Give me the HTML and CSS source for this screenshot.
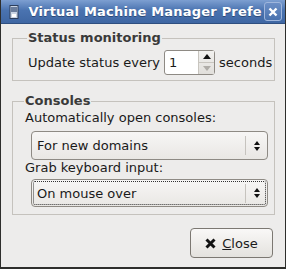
FILE: index.html
```html
<!DOCTYPE html>
<html lang="en">
<head>
    <meta charset="UTF-8">
    <title>Virtual Machine Manager Preferences</title>
    <link rel="stylesheet" href="styles.css">
</head>
<body>
    <div class="window">
        <div class="titlebar">
            <span class="app-icon">
                <svg width="10" height="14" viewBox="0 0 10 14">
                    <rect x="1" y="0.5" width="8" height="13" fill="#c9d4e4" stroke="#2c3e5c"/>
                    <rect x="2" y="2" width="6" height="5" fill="#6a7d9c"/>
                    <rect x="3" y="9" width="4" height="3" fill="#fff"/>
                </svg>
            </span>
            <span class="title">Virtual Machine Manager Prefe</span>
            <span class="close-x">
                <svg width="10" height="10" viewBox="0 0 10 10">
                    <path d="M1.5 1.5 L8.5 8.5 M8.5 1.5 L1.5 8.5" stroke="#fff" stroke-width="2.4"/>
                </svg>
            </span>
        </div>
        <div class="content">
            <fieldset class="frame">
                <legend>Status monitoring</legend>
                <div class="row">
                    <span>Update status every</span>
                    <span class="spin">
                        <span class="spin-value">1</span>
                        <span class="spin-arrows">
                            <span class="arrow up"></span>
                            <span class="arrow down"></span>
                        </span>
                    </span>
                    <span>seconds</span>
                </div>
            </fieldset>
            <fieldset class="frame consoles">
                <legend>Consoles</legend>
                <div class="label first">Automatically open consoles:</div>
                <div class="combo">
                    <span class="combo-text">For new domains</span>
                    <span class="combo-sep"></span>
                    <span class="updown"></span>
                </div>
                <div class="label">Grab keyboard input:</div>
                <div class="combo focused">
                    <span class="combo-text">On mouse over</span>
                    <span class="combo-sep"></span>
                    <span class="updown"></span>
                </div>
            </fieldset>
            <div class="buttons">
                <button class="btn">
                    <svg width="11" height="11" viewBox="0 0 11 11">
                        <path d="M1.5 1.5 L9.5 9.5 M9.5 1.5 L1.5 9.5" stroke="#111" stroke-width="3"/>
                    </svg>
                    <span><u>C</u>lose</span>
                </button>
            </div>
        </div>
    </div>
</body>
</html>
```
FILE: styles.css
```css
body {
    margin: 0;
    font-family: "DejaVu Sans", sans-serif;
    font-size: 13px;
    color: #1a1a1a;
    background: #3c3b37;
}
.window {
    width: 284px;
    height: 267px;
    border-left: 1px solid #2e2e2c;
    border-right: 1px solid #2e2e2c;
    border-bottom: 2px solid #2e2e2c;
    background: #edeceb;
    display: flex;
    flex-direction: column;
    overflow: hidden;
}
.titlebar {
    height: 24px;
    box-sizing: border-box;
    background: linear-gradient(to bottom, #7d9fd1, #4a73b0 45%, #3f67a3);
    border-bottom: 1px solid #2f4f80;
    display: flex;
    align-items: center;
    padding-left: 8px;
    padding-right: 3px;
    color: #fff;
    font-weight: bold;
    font-size: 13px;
}
.app-icon {
    width: 12px;
    display: flex;
    margin-right: 8px;
}
.title {
    flex: 1;
    white-space: nowrap;
    text-shadow: 0 1px 0 #2c4a78;
    letter-spacing: 0.2px;
}
.close-x {
    width: 17px;
    height: 17px;
    border: 1px solid #9fb6dc;
    border-radius: 3px;
    background: linear-gradient(to bottom, #6c8fc6, #4a72ae);
    display: flex;
    align-items: center;
    justify-content: center;
    margin-left: 2px;
}
.content {
    flex: 1;
    padding: 6px 10px 0 11px;
    display: flex;
    flex-direction: column;
}
.frame {
    margin: 0;
    border: 1px solid #c5c2bd;
    padding: 4px 0 5px 15px;
    min-width: 0;
}
.frame legend {
    font-weight: bold;
    color: #3a3a3a;
    padding: 0 1px;
    margin-left: -1px;
    line-height: 16px;
}
.row {
    display: flex;
    align-items: center;
    gap: 4px;
}
.spin {
    width: 51px;
    height: 25px;
    box-sizing: border-box;
    border: 1px solid #8e8a84;
    border-radius: 3px;
    background: #fff;
    display: flex;
}
.spin-value {
    flex: 1;
    padding: 4px 0 0 4px;
}
.spin-arrows {
    width: 15px;
    border-left: 1px solid #c8c5bf;
    background: linear-gradient(to bottom, #f2f1ef, #e1dfdb);
    display: flex;
    flex-direction: column;
}
.arrow {
    flex: 1;
    display: flex;
    align-items: center;
    justify-content: center;
}
.arrow.up {
    border-bottom: 1px solid #c8c5bf;
}
.arrow.up::after {
    content: "";
    border-left: 4px solid transparent;
    border-right: 4px solid transparent;
    border-bottom: 5px solid #111;
}
.arrow.down::after {
    content: "";
    border-left: 4px solid transparent;
    border-right: 4px solid transparent;
    border-top: 5px solid #b0ada8;
}
.consoles {
    margin-top: 12px;
    padding: 0 6px 7px 12px;
}
.label {
    height: 17px;
}
.label.first {
    margin-top: 1px;
    height: 19px;
}
.combo {
    margin-left: 6px;
    margin-top: 2px;
    height: 29px;
    box-sizing: border-box;
    border: 1px solid #8e8a84;
    border-radius: 4px;
    background: linear-gradient(to bottom, #f7f6f5, #e9e7e4);
    display: flex;
    align-items: center;
    padding: 0 7px 0 5px;
}
.combo.focused {
    outline: 1px dotted #333;
    outline-offset: -3px;
    height: 28px;
}
.combo-text {
    flex: 1;
}
.combo-sep {
    width: 1px;
    height: 19px;
    background: #c6c3be;
    margin-right: 8px;
}
.updown {
    display: flex;
    flex-direction: column;
    gap: 2px;
}
.updown::before {
    content: "";
    border-left: 3.5px solid transparent;
    border-right: 3.5px solid transparent;
    border-bottom: 4px solid #111;
}
.updown::after {
    content: "";
    border-left: 3.5px solid transparent;
    border-right: 3.5px solid transparent;
    border-top: 4px solid #111;
}
.buttons {
    display: flex;
    justify-content: flex-end;
    margin-top: 13px;
    padding-right: 2px;
}
.btn {
    width: 83px;
    height: 30px;
    border: 1px solid #7c7872;
    border-radius: 4px;
    background: linear-gradient(to bottom, #f9f8f7, #e4e2de);
    font-family: inherit;
    font-size: 13px;
    color: #1a1a1a;
    display: flex;
    align-items: center;
    justify-content: center;
    gap: 6px;
    padding: 0;
}
```
